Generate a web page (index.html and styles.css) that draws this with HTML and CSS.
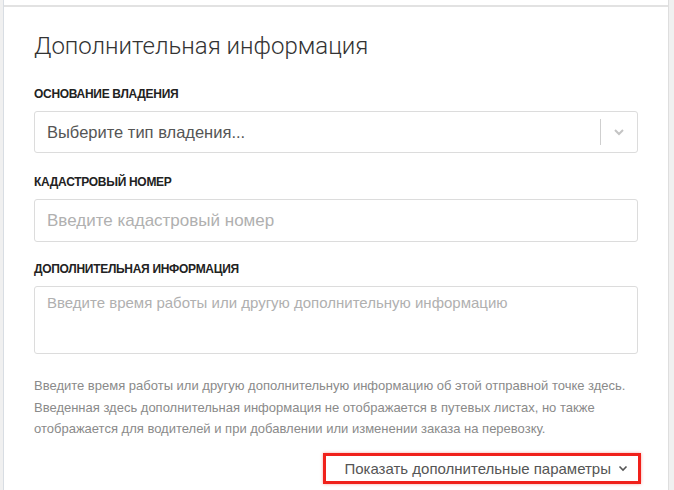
FILE: index.html
```html
<!DOCTYPE html>
<html lang="ru">
<head>
<meta charset="UTF-8">
<meta name="viewport" content="width=device-width, initial-scale=1.0">
<title>Дополнительная информация</title>
<link rel="stylesheet" href="styles.css">
</head>
<body>

<div class="page">
  <section class="card">
    <h2>Дополнительная информация</h2>

    <label class="field-label">Основание владения</label>
    <div class="select">
      <span class="select-value">Выберите тип владения...</span>
      <span class="select-sep"></span>
      <span class="select-arrow">
        <svg width="12" height="8" viewBox="0 0 12 8"><path d="M2 2l4 4 4-4" fill="none" stroke="#c4c4c4" stroke-width="2"/></svg>
      </span>
    </div>

    <label class="field-label">Кадастровый номер</label>
    <input class="input" type="text" placeholder="Введите кадастровый номер">

    <label class="field-label">Дополнительная информация</label>
    <textarea class="input textarea" placeholder="Введите время работы или другую дополнительную информацию"></textarea>

    <p class="help">Введите время работы или другую дополнительную информацию об этой отправной точке здесь. Введенная здесь дополнительная информация не отображается в путевых листах, но также отображается для водителей и при добавлении или изменении заказа на перевозку.</p>

    <div class="more-row">
      <button class="more-btn">Показать дополнительные параметры
        <svg width="10" height="7" viewBox="0 0 10 7"><path d="M1.5 1.5l3.5 3.5 3.5-3.5" fill="none" stroke="#555" stroke-width="1.6"/></svg>
      </button>
    </div>
  </section>
</div>

</body>
</html>
```

FILE: styles.css
```css
:root {
  --border: #dcdcdc;
  --label: #222;
  --muted: #8a8a8a;
  --placeholder: #b0b0b0;
}

body {
  margin: 0;
  font-family: "Liberation Sans", Arial, sans-serif;
  background: #f0f0f0;
  color: var(--label);
}

.page {
  height: 490px;
  padding: 0 5px 0 3px;
  overflow: hidden;
}

.card {
  background: white;
  border-left: 1px solid #d8dde3;
  border-right: 1px solid #dedede;
  height: 100%;
  padding: 0 30px 0 30px;
  box-sizing: border-box;
}

.card::before {
  content: "";
  display: block;
  height: 5px;
  border-bottom: 2px solid #e2e2e2;
  margin: 0 -30px;
}

.card h2 {
  font-family: Roboto, sans-serif;
  font-weight: 300;
  font-size: 24px;
  color: #333;
  margin: 23px 0 0;
  line-height: 32px;
}

.field-label {
  display: block;
  font-size: 12px;
  font-weight: bold;
  text-transform: uppercase;
  letter-spacing: -0.3px;
  margin: 19px 0 9px;
  line-height: 16px;
}

.card h2 + .field-label {
  margin-top: 24px;
}

.select + .field-label {
  margin-top: 21px;
}

.select, .input {
  width: 100%;
  box-sizing: border-box;
  border: 1px solid var(--border);
  border-radius: 3px;
  background: white;
  height: 43px;
}

.select {
  display: flex;
  align-items: center;
  height: 42px;
}

.select-value {
  flex: 1;
  padding-left: 12px;
  font-size: 16.5px;
  color: #555;
}

.select-sep {
  width: 1px;
  height: 26px;
  background: #cfcfcf;
}

.select-arrow {
  width: 36px;
  display: flex;
  justify-content: center;
}

.input {
  display: block;
  padding: 0 12px;
  font-family: inherit;
  font-size: 17px;
  color: #333;
  outline: none;
}

.input::placeholder {
  color: var(--placeholder);
}

.textarea {
  height: 68px;
  padding-top: 7px;
  font-size: 15px;
  resize: none;
}

.help {
  font-size: 13px;
  line-height: 21.5px;
  color: var(--muted);
  margin: 21px 0 0;
}

.more-row {
  display: flex;
  justify-content: flex-end;
  margin-top: 13px;
}

.more-btn {
  display: flex;
  align-items: center;
  gap: 7px;
  border: 3px solid #f0201a;
  background: white;
  font-family: inherit;
  font-size: 15px;
  color: #555;
  padding: 4px 10px 4px 18px;
  margin-right: -3px;
  box-shadow: 0 0 3px rgba(240, 32, 26, 0.4);
}
```
